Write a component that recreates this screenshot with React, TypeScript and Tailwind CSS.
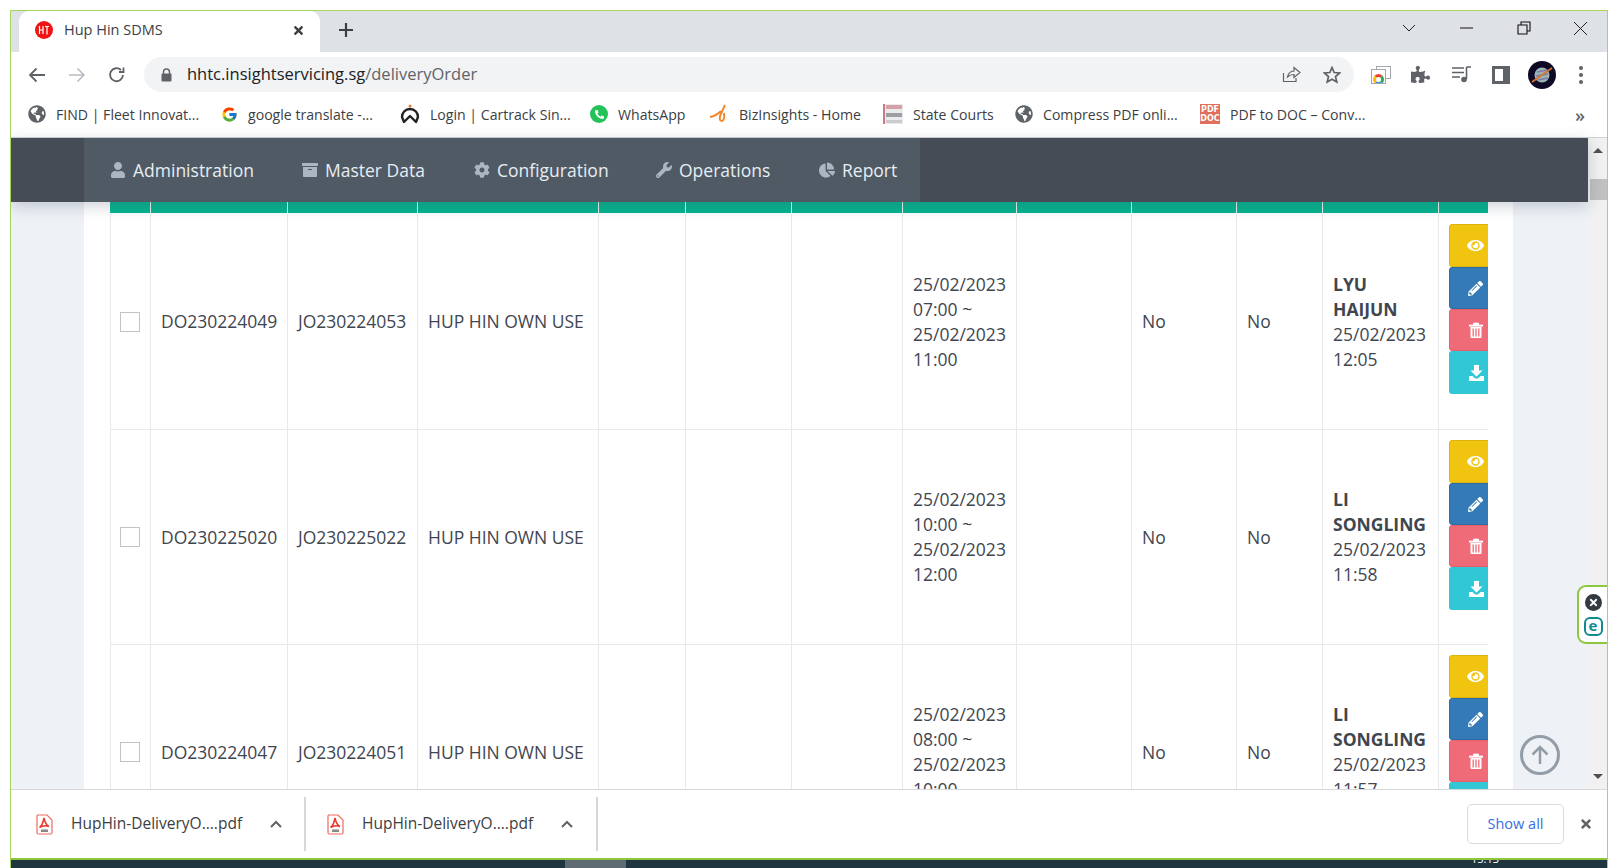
import React from "react";
import { FaUser, FaArchive, FaCog, FaWrench, FaChartPie, FaEye, FaPencilAlt, FaGlobeAmericas, FaPhoneAlt, FaPuzzlePiece, FaTimes } from "react-icons/fa";
import { FcGoogle } from "react-icons/fc";

const Lines = ({ d, size = 18, w = 1.8, color = "#5f6368", vb = 18 }: { d: string; size?: number; w?: number; color?: string; vb?: number }) => (
  <svg width={size} height={size} viewBox={`0 0 ${vb} ${vb}`} fill="none" stroke={color} strokeWidth={w} className="shrink-0">
    <path d={d} />
  </svg>
);

const Globe = () => <FaGlobeAmericas className="shrink-0 text-[18px] text-[#5f6368]" />;

const WhatsApp = () => (
  <div className="w-[18px] h-[18px] shrink-0 rounded-full bg-[#25c25a] flex items-center justify-center text-white text-[9px]">
    <FaPhoneAlt />
  </div>
);
const Cartrack = () => (
  <svg width="20" height="20" viewBox="0 0 20 20" className="shrink-0">
    <circle cx="10" cy="2" r="1.500" fill="#e8792b" />
    <path d="M10 5 C15 5 18 9 18 13 L16 18 L10 12 L4 18 L2 13 C2 9 5 5 10 5 Z" fill="none" stroke="#222" strokeWidth="2.400" strokeLinejoin="round" />
  </svg>
);
const Biz = () => (
  <svg width="20" height="20" viewBox="0 0 20 20" className="shrink-0" fill="none" stroke="#f08a2c" strokeWidth="2">
    <path d="M1 13 Q7 12 12 7 M16 1 L11 12 Q10 17 13 17 Q16 16 15 9" />
  </svg>
);
const Courts = () => (
  <div className="w-[20px] h-[20px] shrink-0 bg-[#eceaea] border-l-2 border-[#c97a85] flex flex-col justify-between py-[1px] px-[1px]">
    <div className="h-[4px] bg-[#d3a2a8]" />
    <div className="h-[4px] bg-[#9a9ea5]" />
    <div className="h-[3px] bg-[#c9cbce]" />
  </div>
);
const PdfDoc = () => (
  <div className="w-[20px] h-[20px] shrink-0 bg-[#e0705c] text-white text-[8px] leading-[9px] font-bold text-center font-['DejaVu_Sans',sans-serif] overflow-hidden pt-[1px]">
    PDF<br />DOC
  </div>
);
const bookmarks: [React.ReactNode, string, string][] = [
  [<Globe />, "FIND | Fleet Innovat...", "w-[193px]"],
  [<FcGoogle className="shrink-0 text-[17px]" />, "google translate -...", "w-[179px]"],
  [<Cartrack />, "Login | Cartrack Sin...", "w-[190px]"],
  [<WhatsApp />, "WhatsApp", "w-[119px]"],
  [<Biz />, "BizInsights - Home", "w-[174px]"],
  [<Courts />, "State Courts", "w-[132px]"],
  [<Globe />, "Compress PDF onli...", "w-[185px]"],
  [<PdfDoc />, "PDF to DOC – Conv...", "w-[190px]"],
];

const PdfIcon = () => (
  <svg width="17" height="21" viewBox="0 0 17 21" className="shrink-0">
    <path d="M1.500 1 H11 L16 6 V18.500 Q16 20 14.500 20 H2.500 Q1 20 1 18.500 V2 Z" fill="#fff" stroke="#ef6a5f" strokeWidth="1.200" />
    <path d="M8 4 C7 9 6 12 3.500 13.500 C6 12 10 11.500 13 12.500 C10.500 11.500 9 8.500 8 4 Z" fill="none" stroke="#e8382c" strokeWidth="1.500" />
    <rect x="5" y="15.500" width="7" height="2.500" fill="#888" />
  </svg>
);

const Download = ({ width, pad }: { width: string; pad: string }) => (
  <div className={`${width} ${pad} h-[54px] flex items-center border-r-2 border-[#d5d7da] shrink-0`}>
    <PdfIcon />
    <span className="ml-[18px] w-[172px] whitespace-nowrap text-[15.500px] text-[#3c4043]">HupHin-DeliveryO....pdf</span>
    <div className="ml-[26px]"><Lines d="M2 10 L7 5 L12 10" size={14} vb={14} w={2} color="#5f6368" /></div>
  </div>
);

const TrashIcon = () => (
  <svg width="14" height="16" viewBox="0 0 14 16" className="shrink-0">
    <path d="M0 3 H14 V4.200 H0 Z M4.500 3 V1 H9.500 V3" fill="#fff" stroke="#fff" strokeWidth="0.700" />
    <path d="M1.500 5 H12.500 V15 Q12.500 16 11.500 16 H2.500 Q1.500 16 1.500 15 Z" fill="#fff" />
    <path d="M4.200 6.500 V14.500 M7 6.500 V14.500 M9.800 6.500 V14.500" stroke="#f06b78" strokeWidth="1.300" />
  </svg>
);
const SaveIcon = () => (
  <svg width="15" height="16" viewBox="0 0 15 16" className="shrink-0" fill="#fff">
    <path d="M5 0 H10 V5.500 H13.500 L7.500 11.500 L1.500 5.500 H5 Z" />
    <path d="M0 11 H3.500 L6 13.500 H9 L11.500 11 H15 V16 H0 Z" />
  </svg>
);

const ActionButtons = () => (
  <div className="pl-[10px] pt-[10px] flex flex-col overflow-hidden">
    <div className="w-[60px] h-[43px] rounded-l-[3px] bg-[#f1c40f] border border-[#dcb20e] flex items-center pl-[17px] text-white text-[17px]"><FaEye /></div>
    <div className="w-[60px] h-[42px] rounded-l-[3px] bg-[#337ab7] border border-[#2e6da4] flex items-center pl-[18px] text-white text-[15px]"><FaPencilAlt /></div>
    <div className="w-[60px] h-[42px] rounded-l-[3px] bg-[#f06b78] border border-[#e65f6c] flex items-center pl-[19px]"><TrashIcon /></div>
    <div className="w-[60px] h-[43px] rounded-l-[3px] bg-[#31c7d5] flex items-center pl-[20px]"><SaveIcon /></div>
  </div>
);

const rows = [
  { do: "DO230224049", jo: "JO230224053", d: ["25/02/2023", "07:00 ~", "25/02/2023", "11:00"], by: "LYU HAIJUN", at: ["25/02/2023", "12:05"], h: "h-[217px] pt-[1px]" },
  { do: "DO230225020", jo: "JO230225022", d: ["25/02/2023", "10:00 ~", "25/02/2023", "12:00"], by: "LI SONGLING", at: ["25/02/2023", "11:58"], h: "h-[215px]" },
  { do: "DO230224047", jo: "JO230224051", d: ["25/02/2023", "08:00 ~", "25/02/2023", "10:00"], by: "LI SONGLING", at: ["25/02/2023", "11:57"], h: "h-[215px]" },
];

const gridCols = "grid grid-cols-[41px_137px_130px_181px_87px_106px_111px_114px_115px_105px_86px_116px_49px]";
const cell = "border-r border-[#e7eaec] px-[10px] flex flex-col justify-center";

const navItems: [React.ReactNode, string, string][] = [
  [<FaUser />, "Administration", "w-[192px]"],
  [<FaArchive />, "Master Data", "w-[172px]"],
  [<FaCog />, "Configuration", "w-[182px]"],
  [<FaWrench />, "Operations", "w-[163px]"],
  [<FaChartPie />, "Report", "w-[102px]"],
];

export default function App() {
  return (
    <div className="w-[1618px] h-[868px] overflow-hidden bg-white pt-[10px] px-[10px] font-['Open_Sans',sans-serif]">
      <div className="h-[858px] border-x border-t border-[#a8d65c] flex flex-col overflow-hidden">
        {/* tab strip */}
        <div className="h-[41px] shrink-0 bg-[#dee1e6] flex items-stretch pl-[8px]">
          <div className="w-[301px] bg-white rounded-t-[10px] flex items-center pl-[16px] pr-[15px] pb-[3px]">
            <div className="w-[18px] h-[18px] rounded-full bg-[#f01414] flex items-center justify-center">
              <svg width="12" height="12" viewBox="0 0 12 12" stroke="#fff" strokeWidth="1.200" fill="none"><path d="M1.500 2 V10 M5 2 V10 M1.500 6 H5 M7 2.500 H11 M9 2.500 V10.500" /></svg>
            </div>
            <span className="ml-[11px] text-[14.500px] text-[#3c4043] flex-1">Hup Hin SDMS</span>
            <FaTimes className="text-[13px] text-[#3c4043]" />
          </div>
          <div className="ml-[17px] flex items-center pb-[3px]">
            <Lines d="M9 2 V16 M2 9 H16" size={18} w={2.200} color="#3c4043" />
          </div>
          <div className="ml-auto flex items-center pb-[7px]">
            <div className="w-[58px] flex justify-center"><Lines d="M1 4 L7 10 L13 4" size={14} vb={14} w={1} color="#222" /></div>
            <div className="w-[57px] flex justify-center"><Lines d="M1 7 H14" size={15} vb={15} w={1} color="#111" /></div>
            <div className="w-[58px] flex justify-center"><Lines d="M1 4 H10 V13 H1 Z M4 4 V1 H13 V10 H10" size={14} vb={14} w={1.100} color="#111" /></div>
            <div className="w-[54px] flex justify-center"><Lines d="M1 1 L14 14 M14 1 L1 14" size={15} vb={15} w={1} color="#222" /></div>
          </div>
        </div>
        {/* toolbar */}
        <div className="h-[41px] shrink-0 bg-white flex items-center pl-[17px] pr-[18px] pt-[4px]">
          <Lines d="M17 9 H2 M8.500 2.500 L2 9 L8.500 15.500" w={1.800} />
          <div className="ml-[22px]"><Lines d="M1 9 H16 M9.500 2.500 L16 9 L9.500 15.500" w={1.600} color="#b8bbc0" /></div>
          <div className="ml-[22px]"><Lines d="M15 9 A6.500 6.500 0 1 1 13 4 M15.500 1.500 V6 H11" w={1.800} /></div>
          <div className="ml-[18px] w-[1210px] h-[35px] rounded-full bg-[#f1f3f4] flex items-center pl-[17px] pr-[13px]">
            <svg width="11" height="14" viewBox="0 0 11 14" className="shrink-0"><path d="M2.500 6 V4 A3 3 0 0 1 8.500 4 V6" fill="none" stroke="#5f6368" strokeWidth="1.400" /><rect x="0.500" y="5.500" width="10" height="8" rx="1" fill="#5f6368" /></svg>
            <span className="ml-[15px] text-[16.500px] text-[#202124] whitespace-nowrap">hhtc.insightservicing.sg<span className="text-[#5f6368]">/deliveryOrder</span></span>
            <div className="ml-auto flex items-center gap-[21px]">
              <Lines d="M1.500 8 V16.500 H14 V13 M5.500 12 Q6.500 6.500 12 6 V2.500 L18 7.500 L12 12.500 V9.500 Q8 9.500 5.500 12 Z" size={20} vb={20} w={1.200} />
              <Lines d="M9 1.500 L11.200 6.500 L16.600 7 L12.500 10.600 L13.800 16 L9 13.200 L4.200 16 L5.500 10.600 L1.400 7 L6.800 6.500 Z" w={1.700} color="#5f6368" />
            </div>
          </div>
          <div className="ml-[17px] relative w-[20px] h-[18px] shrink-0">
            <div className="absolute right-0 top-0 w-[15px] h-[13px] border border-[#a4a7ab]" />
            <div className="absolute left-0 top-[3px] w-[15px] h-[15px] bg-white border border-[#a4a7ab] overflow-hidden">
              <div className="mt-[4px] mx-auto w-[11px] h-[11px] rounded-full border-[3px] border-t-[#ea4335] border-l-[#fbbc05] border-r-[#34a853] border-b-[#4285f4]" />
            </div>
          </div>
          <FaPuzzlePiece className="ml-[20px] text-[19px] text-[#5f6368] shrink-0" />
          <div className="ml-[21px] shrink-0">
            <svg width="21" height="21" viewBox="0 0 21 21" fill="none" stroke="#5f6368" strokeWidth="1.600">
              <path d="M1 4 H13 M1 8.500 H13 M1 13 H9 M15.500 3 V15 M15.500 3 H20" />
              <circle cx="13" cy="15.500" r="2.800" fill="#5f6368" stroke="none" />
            </svg>
          </div>
          <div className="ml-[20px] w-[18px] h-[18px] bg-[#5f6368] flex justify-start p-[3px] shrink-0"><div className="w-[8px] h-[12px] bg-white" /></div>
          <div className="ml-[18px] shrink-0">
            <svg width="28" height="28" viewBox="0 0 28 28">
              <circle cx="14" cy="14" r="14" fill="#0e0a26" />
              <circle cx="14" cy="14" r="7.500" fill="#9cb5b5" />
              <path d="M9 11 L19 9 M8 15 L20 13 M10 19 L20 17" stroke="#7c7aa8" strokeWidth="1.500" />
              <path d="M4 21 L24 7" stroke="#d9742c" strokeWidth="1.700" />
            </svg>
          </div>
          <div className="ml-[23px] flex flex-col gap-[3px] shrink-0">
            <div className="w-[4px] h-[4px] rounded-full bg-[#5f6368]" />
            <div className="w-[4px] h-[4px] rounded-full bg-[#5f6368]" />
            <div className="w-[4px] h-[4px] rounded-full bg-[#5f6368]" />
          </div>
        </div>
        {/* bookmarks */}
        <div className="h-[45px] shrink-0 bg-white border-b border-[#d0d2d5] flex items-center pl-[17px] pr-[22px] pb-[1px]">
          {bookmarks.map(([icon, label, w]) => (
            <div key={label} className={`${w} flex items-center gap-[10px] shrink-0 text-[14.100px] text-[#3c4043] whitespace-nowrap`}>
              {icon}
              <span>{label}</span>
            </div>
          ))}
          <span className="ml-auto text-[18px] leading-none text-[#5f6368] font-semibold">»</span>
        </div>
        {/* viewport */}
        <div className="relative h-[651px] shrink-0 flex">
          <div className="w-[1577px] shrink-0 flex flex-col">
            <nav className="relative z-10 h-[64px] shrink-0 bg-[#464c56] pl-[73px] shadow-[0_4px_14px_rgba(60,70,90,0.25)]">
              <div className="w-[836px] h-full bg-[#4f5a65] flex items-center pl-[26px]">
                {navItems.map(([icon, label, w]) => (
                  <div key={label} className={`${w} shrink-0 flex items-center gap-[7px] text-[17.500px] text-[#e8edf2]`}>
                    <span className="text-[16px] text-[#aab6c2]">{icon}</span>
                    <span>{label}</span>
                  </div>
                ))}
              </div>
            </nav>
            <div className="flex-1 min-h-0 bg-[#eef1f6] pl-[73px] pr-[75px]">
              <div className="h-full bg-white px-[26px] pr-[25px] overflow-hidden">
                <div className="w-[1378px] text-[17.500px] leading-[25px] text-[#3f4650] overflow-hidden">
                  <div className={`${gridCols} h-[11px] bg-[#05b38f]`}>
                    {Array.from({ length: 13 }).map((_, i) => (
                      <div key={i} className="border-r border-[#e6f3f0] last:border-r-0" />
                    ))}
                  </div>
                  {rows.map((r) => (
                    <div key={r.do} className={`${gridCols} ${r.h} border-b border-[#e7eaec]`}>
                      <div className="border-x border-[#e7eaec] flex items-center justify-center pr-[1px]">
                        <div className="w-[20px] h-[20px] border border-[#bfc4c9]" />
                      </div>
                      <div className={cell}>{r.do}</div>
                      <div className={cell}>{r.jo}</div>
                      <div className={`${cell} whitespace-nowrap`}>HUP HIN OWN USE</div>
                      <div className={cell} />
                      <div className={cell} />
                      <div className={cell} />
                      <div className={cell}>{r.d.map((l, i) => <div key={i}>{l}</div>)}</div>
                      <div className={cell} />
                      <div className={cell}>No</div>
                      <div className={cell}>No</div>
                      <div className={cell}>
                        <div className="font-bold">{r.by}</div>
                        {r.at.map((l) => <div key={l}>{l}</div>)}
                      </div>
                      <ActionButtons />
                    </div>
                  ))}
                </div>
              </div>
            </div>
          </div>
          {/* scrollbar */}
          <div className="w-[19px] shrink-0 bg-[#f1f1f1] flex flex-col items-center">
            <div className="mt-[10px] w-0 h-0 border-x-[5px] border-x-transparent border-b-[5px] border-b-[#505050]" />
            <div className="mt-[26px] ml-[2px] w-[17px] h-[21px] bg-[#c1c1c1]" />
            <div className="mt-auto mb-[10px] w-0 h-0 border-x-[5px] border-x-transparent border-t-[5px] border-t-[#505050]" />
          </div>
          {/* ESET */}
          <div className="absolute z-20 right-0 top-[447px] w-[30px] h-[59px] bg-white border-2 border-r-0 border-[#8dc63f] rounded-l-[9px] flex flex-col items-center justify-center gap-[6px]">
            <div className="w-[17px] h-[17px] rounded-full bg-[#333a42] flex items-center justify-center text-white text-[11px]"><FaTimes /></div>
            <div className="w-[19px] h-[19px] rounded-[6px] border-2 border-[#0f8a92] flex items-center justify-center text-[15px] leading-none font-bold text-[#0f8a92] pb-[2px]">e</div>
          </div>
          {/* back to top */}
          <div className="absolute z-20 left-[1509px] top-[597px] w-[40px] h-[40px] rounded-full border-[3px] border-[#939da8] flex items-center justify-center">
            <Lines d="M11 20 V3 M3.500 10.500 L11 3 L18.500 10.500" size={22} vb={22} w={2.500} color="#939da8" />
          </div>
        </div>
        {/* download shelf */}
        <div className="h-[69px] shrink-0 bg-white border-t border-[#d6d8da] flex items-center">
          <Download width="w-[295px]" pad="pl-[25px]" />
          <Download width="w-[292px]" pad="pl-[21px]" />
          <div className="ml-auto w-[97px] h-[40px] rounded-[5px] border border-[#dadce0] flex items-center justify-center text-[14.500px] text-[#3a6fe0]">Show all</div>
          <FaTimes className="ml-[15px] mr-[14px] text-[14px] text-[#5f6368]" />
        </div>
        <div className="h-[2px] shrink-0 bg-[#8dc63f]" />
        <div className="h-[8px] shrink-0 bg-[#1f3540] flex relative overflow-hidden">
          <div className="ml-[554px] w-[61px] h-full bg-[#5e6b73]" />
          <span className="ml-auto mr-[108px] -mt-[8px] text-[11px] leading-[14px] text-white">15:13</span>
        </div>
      </div>
    </div>
  );
}
